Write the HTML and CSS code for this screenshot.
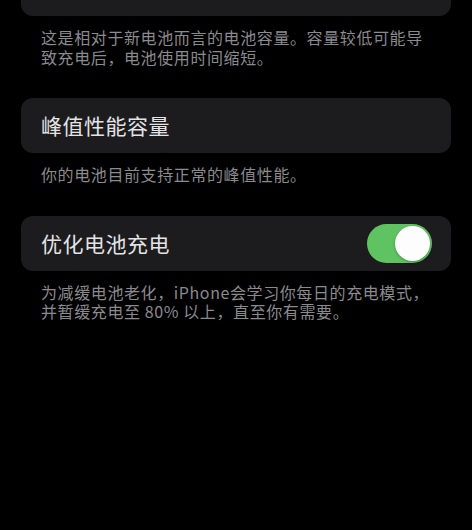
FILE: index.html
```html
<!DOCTYPE html>
<html lang="zh-CN">
<head>
<meta charset="utf-8">
<link rel="stylesheet" href="styles.css">
</head>
<body>
<div class="page">
  <div class="card first">
    <span class="title">最大容量</span>
    <span class="value">100%</span>
  </div>
  <p class="note">这是相对于新电池而言的电池容量。容量较低可能导致充电后，电池使用时间缩短。</p>

  <div class="card">
    <span class="title">峰值性能容量</span>
  </div>
  <p class="note">你的电池目前支持正常的峰值性能。</p>

  <div class="card">
    <span class="title">优化电池充电</span>
    <span class="toggle"><span class="knob"></span></span>
  </div>
  <p class="note">为减缓电池老化，iPhone会学习你每日的充电模式，并暂缓充电至 80% 以上，直至你有需要。</p>
</div>
</body>
</html>
```
FILE: styles.css
```css
html, body {
  margin: 0;
  padding: 0;
  background: #000;
  height: 100%;
  overflow: hidden;
}
.page {
  padding: 0 21px;
  font-family: "Noto Sans CJK SC", "Noto Sans", sans-serif;
}
.card {
  height: 55px;
  background: #1c1c1e;
  border-radius: 12px;
  display: flex;
  align-items: center;
  justify-content: space-between;
  padding: 0 19px 0 20px;
}
.card.first {
  margin-top: -39px;
}
.title {
  color: #e4e4e6;
  font-size: 21px;
  letter-spacing: 0.5px;
  line-height: 1;
}
.value {
  color: #8e8e93;
  font-size: 21px;
  line-height: 1;
  margin-right: 2px;
}
.note {
  margin: 12px 0 31px;
  padding: 0 20px;
  color: #8a8a8f;
  font-size: 16px;
  letter-spacing: 0.6px;
  line-height: 19.5px;
}
.toggle {
  width: 65px;
  height: 39px;
  border-radius: 20px;
  background: #5fc361;
  display: flex;
  align-items: center;
  justify-content: flex-end;
  padding: 0 2px;
  box-sizing: border-box;
}
.knob {
  width: 35px;
  height: 35px;
  border-radius: 50%;
  background: #fdfdfd;
  box-shadow: 0 1px 3px rgba(0,0,0,0.25);
}
```
